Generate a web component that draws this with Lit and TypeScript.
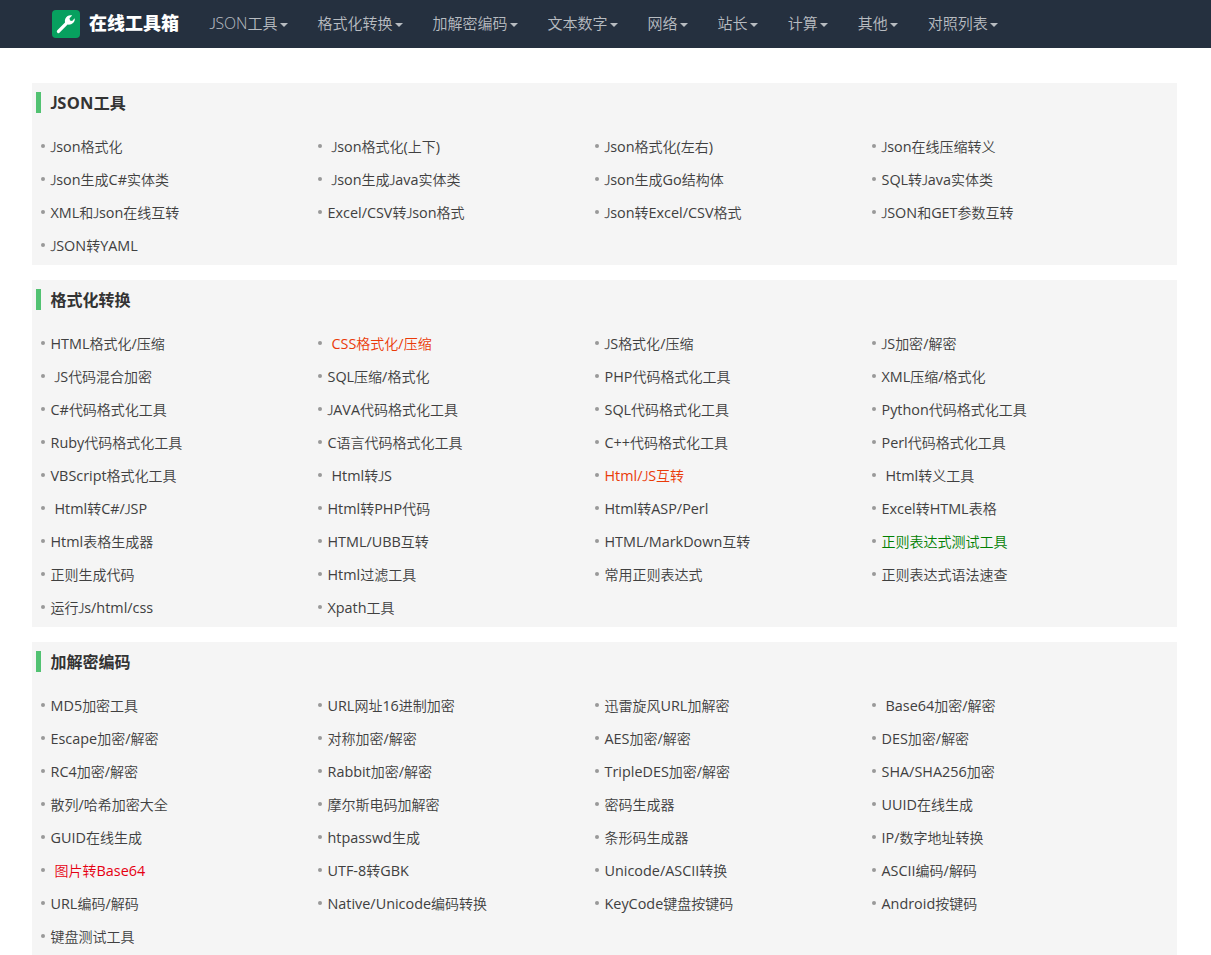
import { LitElement, html, css, svg } from "lit";
import { customElement, property } from "lit/decorators.js";

type Tool = { name: string; tone?: string; indent?: boolean };

// A leading space indents the entry; a trailing "|tone" colours it.
const parse = (list: string[]): Tool[] =>
  list.map((raw) => {
    const [name, tone] = raw.split("|");
    return { name: name.trim(), tone, indent: name.startsWith(" ") };
  });

const NAV = ["JSON工具", "格式化转换", "加解密编码", "文本数字", "网络", "站长", "计算", "其他", "对照列表"];

const SECTIONS = [
  {
    title: "JSON工具",
    tools: parse([
      "Json格式化", " Json格式化(上下)", "Json格式化(左右)", "Json在线压缩转义",
      "Json生成C#实体类", " Json生成Java实体类", "Json生成Go结构体", "SQL转Java实体类",
      "XML和Json在线互转", "Excel/CSV转Json格式", "Json转Excel/CSV格式", "JSON和GET参数互转",
      "JSON转YAML",
    ]),
  },
  {
    title: "格式化转换",
    tools: parse([
      "HTML格式化/压缩", " CSS格式化/压缩|orange", "JS格式化/压缩", "JS加密/解密",
      " JS代码混合加密", "SQL压缩/格式化", "PHP代码格式化工具", "XML压缩/格式化",
      "C#代码格式化工具", "JAVA代码格式化工具", "SQL代码格式化工具", "Python代码格式化工具",
      "Ruby代码格式化工具", "C语言代码格式化工具", "C++代码格式化工具", "Perl代码格式化工具",
      "VBScript格式化工具", " Html转JS", "Html/JS互转|orange", " Html转义工具",
      " Html转C#/JSP", "Html转PHP代码", "Html转ASP/Perl", "Excel转HTML表格",
      "Html表格生成器", "HTML/UBB互转", "HTML/MarkDown互转", "正则表达式测试工具|green",
      "正则生成代码", "Html过滤工具", "常用正则表达式", "正则表达式语法速查",
      "运行Js/html/css", "Xpath工具",
    ]),
  },
  {
    title: "加解密编码",
    tools: parse([
      "MD5加密工具", "URL网址16进制加密", "迅雷旋风URL加解密", " Base64加密/解密",
      "Escape加密/解密", "对称加密/解密", "AES加密/解密", "DES加密/解密",
      "RC4加密/解密", "Rabbit加密/解密", "TripleDES加密/解密", "SHA/SHA256加密",
      "散列/哈希加密大全", "摩尔斯电码加解密", "密码生成器", "UUID在线生成",
      "GUID在线生成", "htpasswd生成", "条形码生成器", "IP/数字地址转换",
      " 图片转Base64|red", "UTF-8转GBK", "Unicode/ASCII转换", "ASCII编码/解码",
      "URL编码/解码", "Native/Unicode编码转换", "KeyCode键盘按键码", "Android按键码",
      "键盘测试工具",
    ]),
  },
];

// Wraps Latin runs so that they can be sized apart from the Chinese glyphs;
// the capital J gets a face in which it rests on the baseline.
const mixed = (text: string) =>
  text.split(/(J|[\x21-\x49\x4b-\x7e]+)/).filter(Boolean).map((run) =>
    run === "J"
      ? html`<span class="jay">${run}</span>`
      : /^[\x21-\x7e]/.test(run)
        ? html`<span class="latin">${run}</span>`
        : run
  );

@customElement("site-header")
class SiteHeader extends LitElement {
  static styles = css`
    :host { display: block; }
    .bar {
      display: flex; align-items: center; height: 48px; box-sizing: border-box;
      padding-left: 52px; background: #25303f; color: #b8bcc1;
    }
    .logo { display: block; width: 28px; height: 28px; }
    .brand { margin-left: 9px; width: 110px; font-size: 18px; font-weight: 900; color: #fff; line-height: 46px; height: 48px; white-space: nowrap; }
    .nav { display: flex; font-size: 15px; font-weight: 350; line-height: 46px; height: 48px; white-space: nowrap; }
    .item { display: flex; padding: 0 14.5px 0 10px; margin-right: 5px; }
    .latin { font-family: "Open Sans"; font-size: 15.8px; }
    .jay { font-family: Lato; font-size: 15.5px; letter-spacing: -0.5px; margin-left: 0.5px; font-weight: 300; -webkit-text-stroke: 0.2px currentColor; }
    .caret { margin: 23px 0 0 2.5px; height: 0; border: 4px solid transparent; border-top-color: currentColor; border-bottom: 0; }
  `;
  render() {
    return html`<header class="bar">
      <svg class="logo" viewBox="0 0 28 28">
        <rect width="28" height="28" rx="4" fill="#07a05f" />
        ${svg`<path fill="#fff" d="M5.3 20.3 13 12.4C12.5 9.9 13.5 7.4 15.6 6C17 5.2 18.7 5 20.2 5.5L17.5 8.3L18 10.4L20.1 10.9L22.7 8.2C23 9.8 22.5 11.5 21.3 12.7C19.8 14.3 17.8 14.9 15.6 14.6L7.7 22.6A1.65 1.65 0 0 1 5.3 20.3Z"/>`}
      </svg>
      <div class="brand">在线工具箱</div>
      <nav class="nav">
        ${NAV.map((n) => html`<div class="item"><span>${mixed(n)}</span><i class="caret"></i></div>`)}
      </nav>
    </header>`;
  }
}

@customElement("tool-section")
class ToolSection extends LitElement {
  @property() heading = "";
  @property({ attribute: false }) tools: Tool[] = [];
  static styles = css`
    :host { display: block; }
    .panel { background: #f5f5f5; padding-bottom: 3px; }
    .head { display: flex; align-items: center; height: 39px; padding: 0 4px 8px; }
    .mark { width: 5px; height: 21px; background: #52c272; }
    .title { display: flex; align-items: baseline; height: 39px; margin: 1px 0 0 9.5px; font-size: 16px; font-weight: 700; line-height: 39px; color: #333; }
    .title .latin { font-size: 16.5px; letter-spacing: 0.3px; font-weight: 700; line-height: 37px; }
    .title .jay { font-size: 16.5px; font-weight: 700; line-height: 37px; -webkit-text-stroke: 0; }
    .grid { display: grid; grid-template-columns: repeat(4, 277px); }
    .tool { display: flex; align-items: center; height: 33px; padding-left: 9px; font-size: 14px; font-weight: 350; color: #404040; white-space: nowrap; }
    .dot { width: 4px; height: 4px; border-radius: 50%; background: #999; margin: 0 5.5px 2px 0; }
    .name { line-height: 33px; }
    .indent { padding-left: 4px; }
    .latin { font-family: "Open Sans"; font-size: 14.4px; font-weight: 400; }
    .jay { font-family: Lato; font-size: 14.5px; font-weight: 300; letter-spacing: -0.3px; -webkit-text-stroke: 0.25px currentColor; }
    .orange { color: #ea3a08; }
    .green { color: #008000; }
    .red { color: #e60012; }
  `;
  render() {
    return html`<section class="panel">
      <div class="head"><i class="mark"></i><h2 class="title">${mixed(this.heading)}</h2></div>
      <div class="grid">
        ${this.tools.map(
          (t) => html`<div class="tool"><i class="dot"></i><span class="name ${t.indent ? "indent" : ""} ${t.tone ?? ""}">${mixed(t.name)}</span></div>`
        )}
      </div>
    </section>`;
  }
}

@customElement("app-root")
class AppRoot extends LitElement {
  static styles = css`
    :host {
      display: block; height: 955px; overflow: hidden; background: #fff;
      font-family: "Noto Sans", "Noto Sans CJK SC", sans-serif;
    }
    .content { display: flex; flex-direction: column; gap: 15px; width: 1145px; margin: 35px 0 0 32px; }
  `;
  render() {
    return html`<site-header></site-header>
      <main class="content">
        ${SECTIONS.map((s) => html`<tool-section .heading=${s.title} .tools=${s.tools}></tool-section>`)}
      </main>`;
  }
}
